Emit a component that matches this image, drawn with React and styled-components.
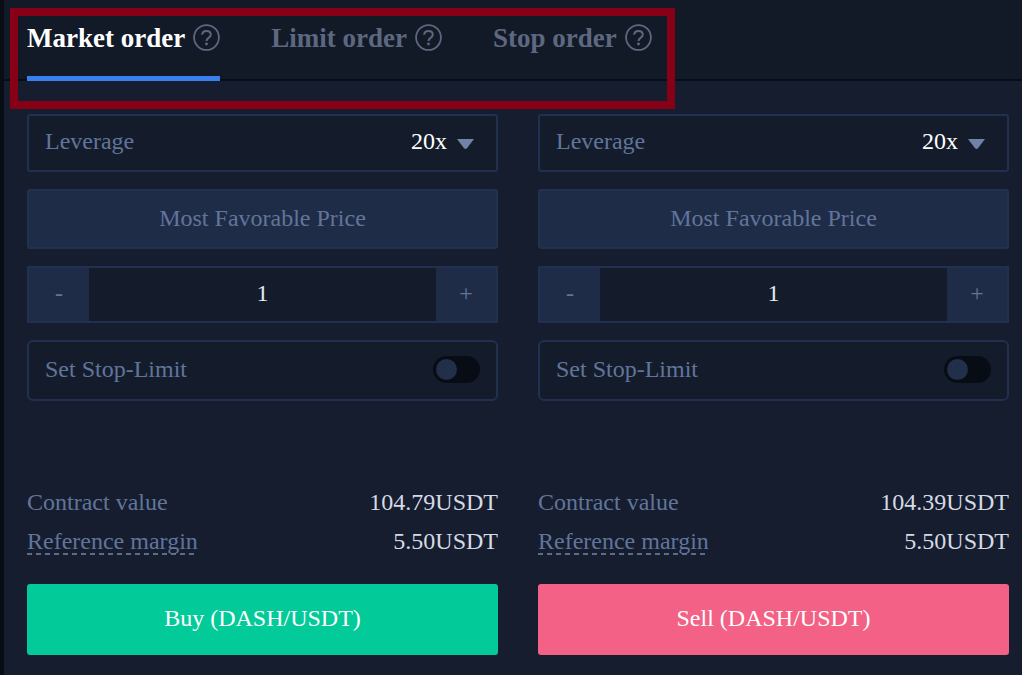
import React, { useState } from 'react'
import styled, { createGlobalStyle } from 'styled-components'

const GlobalStyle = createGlobalStyle`
  * {
    box-sizing: border-box;
  }

  body {
    margin: 0;
    background-color: #ffffff;
    font-family: "Liberation Serif", "Times New Roman", serif;
  }

  button, input, select {
    margin: 0;
    font-family: inherit;
  }
`;

const Panel = styled.main`
  position: relative;
  margin: 0 2px 4px 0;
  border-left: 4px solid #080c14;
  background-color: #151d2e;
  color: #61759b;
  font-size: 24px;
`;

const TabBar = styled.div`
  display: flex;
  gap: 51px;
  padding: 0 23px;
  background-color: #121927;
  border-bottom: 2px solid #090d16;
`;

const Tab = styled.button`
  display: flex;
  align-items: center;
  gap: 8px;
  height: 81px;
  margin-bottom: -2px;
  padding: 0;
  border: 0;
  border-bottom: 5px solid ${props => (props.$active ? '#3a80ec' : 'transparent')};
  background: none;
  color: ${props => (props.$active ? '#ffffff' : '#5d6880')};
  font-size: 27px;
  font-weight: bold;
  line-height: 32px;
  white-space: nowrap;
  cursor: pointer;
`;

const HelpSvg = styled.svg`
  flex: none;
  width: 27px;
  height: 27px;
  margin-bottom: 2px;
  color: #5d6880;
`;

const Highlight = styled.div`
  position: absolute;
  top: 8px;
  left: 6px;
  width: 665px;
  height: 101px;
  border: 8px solid #870015;
  pointer-events: none;
`;

const Columns = styled.div`
  display: grid;
  grid-template-columns: 1fr 1fr;
  gap: 40px;
  padding: 33px 13px 20px 23px;
`;

const Form = styled.form`
  display: flex;
  flex-direction: column;
  min-width: 0;
`;

const Fields = styled.div`
  display: flex;
  flex-direction: column;
  gap: 17px;
  margin-bottom: 81px;
`;

const Field = styled.div`
  display: flex;
  align-items: center;
  justify-content: space-between;
  height: ${props => (props.$tall ? '61px' : '58px')};
  padding: 0 16px 3px;
  border: 2px solid #20304e;
  border-radius: ${props => (props.$tall ? '6px' : '3px')};
  background-color: #141c2b;
`;

const SelectWrap = styled.div`
  display: flex;
  align-items: center;
  gap: 10px;
  padding-right: 6px;
`;

const Select = styled.select`
  appearance: none;
  padding: 0 0 2px;
  border: 0;
  background: none;
  color: #ffffff;
  font-size: 24px;
  line-height: 28px;
  cursor: pointer;
`;

const CaretSvg = styled.svg`
  width: 17px;
  height: 10px;
  margin-top: 4px;
  pointer-events: none;
`;

const PriceButton = styled.button`
  height: 60px;
  padding: 0 0 2px;
  border: 2px solid #21324f;
  border-radius: 3px;
  background-color: #1f2c47;
  color: #61759b;
  font-size: 24px;
  cursor: pointer;
`;

const Stepper = styled.div`
  display: flex;
  height: 57px;
  border: 2px solid #20304e;
  background-color: #141c2b;
`;

const StepButton = styled.button`
  flex: none;
  width: 60px;
  padding: 0 0 2px;
  border: 0;
  background-color: #1f2c47;
  color: #61759b;
  font-size: 24px;
  cursor: pointer;
`;

const Amount = styled.input`
  flex: 1;
  min-width: 0;
  padding: 0 0 2px;
  border: 0;
  background: none;
  color: #e4e8f0;
  font-size: 24px;
  text-align: center;
`;

const Switch = styled.input`
  appearance: none;
  display: flex;
  align-items: center;
  width: 47px;
  height: 27px;
  padding: 0 3px;
  border-radius: 14px;
  background-color: #080c14;
  cursor: pointer;

  &::before {
    content: '';
    width: 21px;
    height: 21px;
    border-radius: 50%;
    background-color: #212f4b;
  }

  &:checked {
    justify-content: flex-end;
  }
`;

const Summary = styled.dl`
  margin: 0 0 24px;
`;

const SummaryRow = styled.div`
  display: flex;
  align-items: center;
  justify-content: space-between;
  height: 39px;
`;

const SummaryLabel = styled.dt`
  line-height: 28px;
  background: ${props => (props.$hint
    ? 'repeating-linear-gradient(90deg, #5b6b8c 0 5px, transparent 5px 9px) bottom / 100% 2px no-repeat'
    : 'none')};
`;

const SummaryValue = styled.dd`
  margin: 0;
  color: #d5dae5;
  line-height: 28px;
`;

const SubmitButton = styled.button`
  height: 71px;
  padding: 0 0 2px;
  border: 0;
  border-radius: 3px;
  background-color: ${props => props.$color};
  color: #ffffff;
  font-size: 24px;
  cursor: pointer;
`;

const HelpIcon = () => (
  <HelpSvg viewBox="0 0 27 27" fill="none" stroke="currentColor" aria-hidden="true">
    <circle cx="13.5" cy="13.5" r="12.4" strokeWidth="1.8" />
    <path d="M9.2 10.8c0-2.3 1.8-3.9 4.3-3.9s4.3 1.5 4.3 3.7c0 1.6-.9 2.4-2.2 3.2-1.4.9-2.1 1.4-2.1 3.3" strokeWidth="2" />
    <circle cx="13.5" cy="20" r="1.4" fill="currentColor" stroke="none" />
  </HelpSvg>
)

const tabs = ['Market order', 'Limit order', 'Stop order']

function OrderForm({ side, value, margin, color }) {
  const [amount, setAmount] = useState('1')
  const step = (n) => setAmount(String(Math.max(1, (Number(amount) || 0) + n)))

  return (
    <Form onSubmit={(e) => e.preventDefault()}>
      <Fields>
        <Field>
          <label htmlFor={`${side}-leverage`}>Leverage</label>
          <SelectWrap>
            <Select id={`${side}-leverage`} defaultValue="20x">
              <option>20x</option>
              <option>10x</option>
              <option>50x</option>
            </Select>
            <CaretSvg viewBox="0 0 17 10" aria-hidden="true">
              <path d="M0 0h17l-7 9.2q-1.5 1.6-3 0z" fill="#7082a6" />
            </CaretSvg>
          </SelectWrap>
        </Field>
        <PriceButton type="button">Most Favorable Price</PriceButton>
        <Stepper>
          <StepButton type="button" onClick={() => step(-1)}>-</StepButton>
          <Amount
            aria-label={`${side} amount`}
            inputMode="numeric"
            value={amount}
            onChange={(e) => setAmount(e.target.value)}
          />
          <StepButton type="button" onClick={() => step(1)}>+</StepButton>
        </Stepper>
        <Field $tall>
          <label htmlFor={`${side}-stop`}>Set Stop-Limit</label>
          <Switch type="checkbox" id={`${side}-stop`} />
        </Field>
      </Fields>
      <Summary>
        <SummaryRow>
          <SummaryLabel>Contract value</SummaryLabel>
          <SummaryValue>{value}</SummaryValue>
        </SummaryRow>
        <SummaryRow>
          <SummaryLabel $hint>Reference margin</SummaryLabel>
          <SummaryValue>{margin}</SummaryValue>
        </SummaryRow>
      </Summary>
      <SubmitButton type="submit" $color={color}>{side} (DASH/USDT)</SubmitButton>
    </Form>
  )
}

export default function App() {
  const [active, setActive] = useState(tabs[0])

  return (
    <>
      <GlobalStyle />
      <Panel>
        <TabBar role="tablist">
          {tabs.map((name) => (
            <Tab
              key={name}
              type="button"
              role="tab"
              aria-selected={name === active}
              $active={name === active}
              onClick={() => setActive(name)}
            >
              {name}
              <HelpIcon />
            </Tab>
          ))}
        </TabBar>
        <Columns>
          <OrderForm side="Buy" value="104.79USDT" margin="5.50USDT" color="#02ca99" />
          <OrderForm side="Sell" value="104.39USDT" margin="5.50USDT" color="#f36186" />
        </Columns>
        <Highlight />
      </Panel>
    </>
  )
}
